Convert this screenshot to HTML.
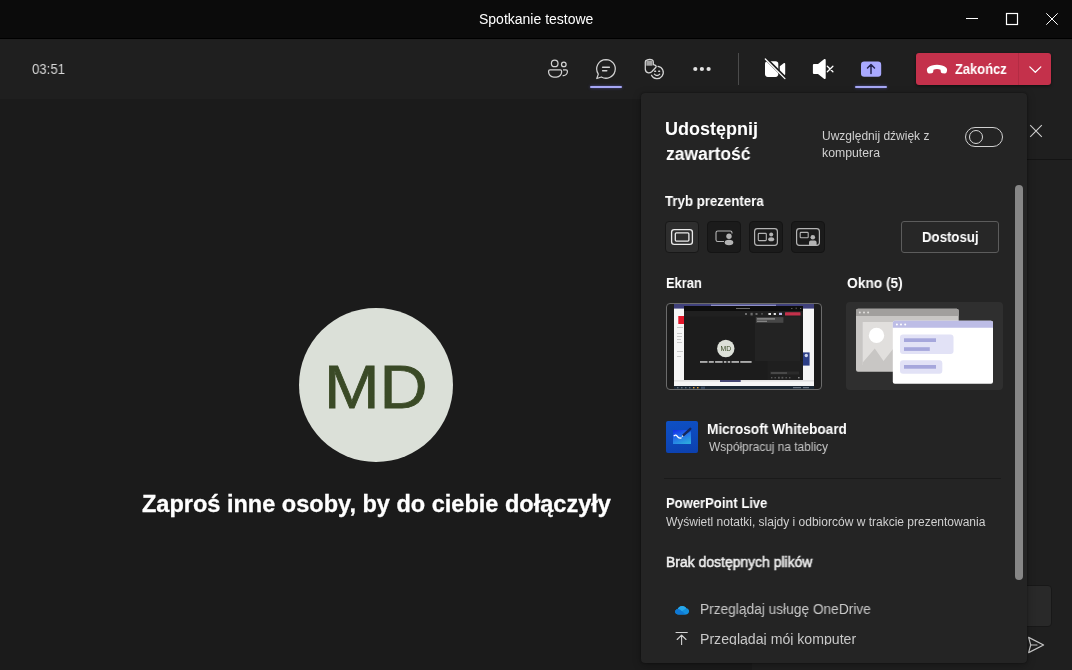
<!DOCTYPE html>
<html lang="pl">
<head>
<meta charset="utf-8">
<title>Spotkanie testowe</title>
<style>
*{box-sizing:border-box;margin:0;padding:0}
html,body{width:1072px;height:670px;overflow:hidden;background:#1b1b1b}
body{font-family:"Liberation Sans",sans-serif;color:#fff;position:relative}
.abs{position:absolute}
.t{position:absolute;white-space:nowrap;line-height:1;transform-origin:0 0;display:block;will-change:transform}
svg{position:absolute;overflow:visible}
#titlebar{position:absolute;left:0;top:0;width:1072px;height:39px;background:#0b0b0b;border-bottom:1px solid #000}
#toolbar{position:absolute;left:0;top:39px;width:1072px;height:60px;background:#1f1f1f}
#stage{position:absolute;left:0;top:99px;width:752px;height:571px;background:#1b1b1b}
#side{position:absolute;left:752px;top:99px;width:320px;height:571px;background:#1f1f1f}
#sidehead{position:absolute;left:0;top:0;width:320px;height:61px;border-bottom:1px solid #141414}
#compose{position:absolute;left:20px;top:486px;width:280px;height:42px;background:#292929;border:1px solid #181818;border-radius:4px}
#avatar{position:absolute;left:299px;top:308px;width:154px;height:154px;border-radius:50%;background:#dbe0d8}
.ul{position:absolute;height:2px;top:86px;width:32px;background:#a6a7f6;border-radius:1px;box-shadow:0 0 3px rgba(120,122,255,.55)}
#endbtn{position:absolute;left:916px;top:53px;width:135px;height:32px;background:#c4314b;border-radius:3px;box-shadow:0 1px 3px rgba(0,0,0,.5)}
#endbtn i{position:absolute;left:102px;top:0;width:1px;height:32px;background:#b32b43}
#panel{position:absolute;left:641px;top:93px;width:386px;height:570px;background:#242424;border-radius:4px;box-shadow:0 2px 8px rgba(0,0,0,.3),0 0 2px rgba(0,0,0,.45)}
#pclip{position:absolute;left:0;top:0;width:386px;height:552px;overflow:hidden}
.pm{position:absolute;top:128px;width:34px;height:32px;border-radius:4px;background:#1b1b1b;border:1px solid #141414}
.pm.sel{background:#2e2e2e;border-color:#181818}
#dost{position:absolute;left:260px;top:128px;width:98px;height:32px;border:1px solid #5c5c5c;border-radius:3px;background:#272727}
#toggle{position:absolute;left:324px;top:34px;width:38px;height:20px;border:1px solid #d0d0d0;border-radius:10px}
#toggle i{position:absolute;left:3px;top:2px;width:14px;height:14px;border:1.5px solid #d8d8d8;border-radius:50%}
#sb{position:absolute;left:374px;top:92px;width:8px;height:395px;border-radius:4px;background:#868686}
#scr svg{will-change:transform}
#scr{position:absolute;left:25px;top:210px;width:156px;height:87px;border:1px solid #6b6b6b;border-radius:4px;background:#1c1c1c;overflow:hidden}
#win{position:absolute;left:205px;top:209px;width:157px;height:88px;border-radius:4px;background:#2f2f2f;overflow:hidden}
#hr{position:absolute;left:23px;top:385px;width:337px;height:1px;background:#1a1a1a}
#wbi{position:absolute;left:25px;top:328px;width:32px;height:32px;border-radius:2px;background:linear-gradient(170deg,#0e50c4 0%,#0d49bb 50%,#0c40ae 100%);overflow:hidden}
</style>
</head>
<body>
<div id="titlebar"></div>
<div id="toolbar"></div>
<div id="stage"></div>
<div id="side"><div id="sidehead"></div><div id="compose"></div></div>
<div id="avatar"></div>

<!-- window controls -->
<svg style="left:960px;top:8px" width="104" height="24" viewBox="960 8 104 24" fill="none" stroke="#fff" stroke-width="1">
 <path d="M966 18.5H978"/>
 <rect x="1006.5" y="13.5" width="11" height="11" stroke-width="1.2"/>
 <path d="M1046.3 13.3L1057.7 24.7M1057.7 13.3L1046.3 24.7"/>
</svg>

<!-- toolbar icons -->
<svg id="tbicons" style="left:540px;top:50px" width="360" height="40" viewBox="540 50 360 40" fill="none">
 <!-- people -->
 <g stroke="#d2d2d2" stroke-width="1.25">
  <circle cx="554.7" cy="63.4" r="3.3"/>
  <circle cx="563.8" cy="64.4" r="2.3"/>
  <path d="M550 69.9h10.2a1.4 1.4 0 0 1 1.4 1.4v0.6a5.1 5.1 0 0 1-5.1 5.1h-2.8a5.1 5.1 0 0 1-5.1-5.1v-0.6a1.4 1.4 0 0 1 1.4-1.4z"/>
  <path d="M563 69.9h3a1.4 1.4 0 0 1 1.4 1.4v0.3a4 4 0 0 1-4 4h-0.8"/>
 </g>
 <!-- chat -->
 <g stroke="#d2d2d2" stroke-width="1.25" stroke-linecap="round" stroke-linejoin="round">
  <path d="M606 59.6a9.3 9.3 0 1 1-4.6 17.4l-4.6 1.5 1.5-4.4A9.3 9.3 0 0 1 606 59.6z"/>
  <path d="M602.6 67.2h6.8M602.6 70.8h4.2" stroke-width="1.4"/>
 </g>
 <!-- hand + emoji -->
 <path d="M646.300 60.600h6.100v5.100h-6.100z" fill="#a4a4a4"/>
 <g stroke="#d6d6d6" stroke-width="1.250" stroke-linejoin="round" stroke-linecap="round">
  <path d="M645.300 69.400V62Q645.300 60.400 646.800 60.100Q648.300 59.300 649.800 59.300Q651.300 59.300 652.500 60.100Q653.300 60.500 653.300 62V64.700Q654.300 64.700 655.400 65.400Q656.800 66.300 655.700 67.500L651.700 71.700Q650.200 73.100 648.400 72.900Q645.500 72.400 645.300 69.400z"/>
  <path d="M658 66.350A6.200 6.200 0 1 1 651.500 75.200"/>
  <path d="M654.400 74.100Q657.050 76.900 659.700 74.100" stroke-width="1.300"/>
  <path d="M654.700 71.300h0.900M658.700 71.300h0.900" stroke-width="1.400"/>
 </g>
 <!-- dots -->
 <g fill="#e2e2e2"><circle cx="695.3" cy="69" r="2.1"/><circle cx="701.9" cy="69" r="2.1"/><circle cx="708.6" cy="69" r="2.1"/></g>
 <!-- divider -->
 <path d="M738.5 53V85" stroke="#4b4b4b" stroke-width="1"/>
 <!-- camera off -->
 <g fill="#fff">
  <rect x="765" y="61.2" width="13.3" height="15.7" rx="2.8"/>
  <path d="M779.8 66.2l4.2-3.1c0.5-0.4 1.2 0 1.2 0.6v10.6c0 0.6-0.7 1-1.2 0.6l-4.2-3.1z"/>
 </g>
 <path d="M765.9 58.6L785.5 78.2" stroke="#1f1f1f" stroke-width="3.2" stroke-linecap="round"/>
 <path d="M765.3 59L784.9 78.6" stroke="#fff" stroke-width="1.3" stroke-linecap="round"/>
 <!-- speaker mute -->
 <path d="M813.9 64h4.1l6-4.8c0.7-0.5 1.7 0 1.7 0.8v18c0 0.9-1 1.3-1.7 0.8l-6-4.8h-4.1a1 1 0 0 1-1-1v-8a1 1 0 0 1 1-1z" fill="#fff"/>
 <path d="M827.3 66.2l5.6 5.6M832.9 66.2l-5.6 5.6" stroke="#fff" stroke-width="1.3" stroke-linecap="round"/>
 <!-- share -->
 <rect x="861" y="61.5" width="20.2" height="15.2" rx="3.2" fill="#a9a9ff"/>
 <path d="M871 73.6V65M867.5 68L871 64.5L874.5 68" stroke="#23234f" stroke-width="1.5" stroke-linecap="round" stroke-linejoin="round"/>
</svg>
<div class="ul" style="left:590px"></div>
<div class="ul" style="left:855px"></div>

<div id="endbtn"><i></i>
 <svg style="left:0;top:0" width="135" height="32" viewBox="916 53 135 32" fill="none">
  <path d="M937 64.7c-3.6 0-6.900 1-9 2.700-1 0.800-1.300 2.100-1 3.300l0.300 1.400c0.200 0.900 1 1.500 1.900 1.400l2.500-0.300c0.800-0.100 1.400-0.700 1.500-1.500l0.300-2c1.100-0.400 2.300-0.600 3.500-0.600s2.400 0.200 3.500 0.600l0.300 2c0.100 0.800 0.700 1.400 1.500 1.500l2.500 0.300c0.900 0.100 1.700-0.500 1.900-1.400l0.300-1.400c0.300-1.200 0-2.500-1-3.300-2.100-1.700-5.400-2.700-9-2.700z" fill="#fff"/>
  <path d="M1029.800 66.900L1035.300 72.200L1040.800 66.900" stroke="#fff" stroke-width="1.3" stroke-linecap="round" stroke-linejoin="round"/>
 </svg>
</div>

<!-- side panel bits -->
<svg style="left:1027px;top:120px" width="45" height="24" viewBox="1027 120 45 24" fill="none" stroke="#cfcfcf" stroke-width="1.1">
 <path d="M1030.200 125.200L1041.800 136.800M1041.800 125.200L1030.200 136.800"/>
</svg>
<svg style="left:1027px;top:635px" width="20" height="20" viewBox="1027 635 20 20" fill="none" stroke="#c8c8c8" stroke-width="1.2" stroke-linejoin="round" stroke-linecap="round">
 <path d="M1028.600 637.400L1043.600 645L1028.600 652.600L1030.700 645z"/><path d="M1030.700 645H1037"/>
</svg>

<div id="panel"><div id="pclip">
 <div id="toggle"><i></i></div>
 <div class="pm sel" style="left:24px"></div>
 <div class="pm" style="left:66px"></div>
 <div class="pm" style="left:108px"></div>
 <div class="pm" style="left:150px"></div>
 <svg style="left:24px;top:128px" width="160" height="32" viewBox="665 221 160 32" fill="none">
  <g stroke="#ececec" stroke-width="1.3"><rect x="671.600" y="229.600" width="20.800" height="14.800" rx="2.600"/><rect x="675.300" y="232.900" width="13.600" height="8.200" rx="1"/></g>
  <g stroke="#b4b4b4" stroke-width="1.1"><path d="M724 241.500h-6.200a1.800 1.800 0 0 1-1.800-1.800v-6.900a1.800 1.800 0 0 1 1.800-1.800h12.400a1.800 1.800 0 0 1 1.800 1.800v0.800"/></g>
  <g fill="#b4b4b4"><circle cx="729" cy="236.200" r="2.700"/><ellipse cx="729" cy="242.500" rx="4.300" ry="2.700"/></g>
  <g stroke="#b4b4b4" stroke-width="1.200"><rect x="754.600" y="228.600" width="22.800" height="16.800" rx="2.800"/><rect x="758.300" y="233.400" width="8" height="7.200" rx="0.800" stroke-width="1.100"/></g>
  <g fill="#b4b4b4"><circle cx="771.200" cy="234.600" r="2"/><ellipse cx="771.200" cy="239.300" rx="3" ry="2"/></g>
  <g stroke="#b4b4b4" stroke-width="1.200"><rect x="796.600" y="228.600" width="22.800" height="16.800" rx="2.800"/><rect x="800.200" y="232.400" width="8" height="5.400" rx="0.800" stroke-width="1.100"/></g>
  <g fill="#b4b4b4"><circle cx="812.800" cy="237.300" r="2.300"/><path d="M809 245v-2.600a1.800 1.800 0 0 1 1.800-1.800h4a1.800 1.800 0 0 1 1.800 1.800v2.600z"/></g>
 </svg>
 <div id="dost"></div>

 <!-- Ekran thumbnail -->
 <div id="scr">
  <svg style="left:-1px;top:-1px" width="156" height="87" viewBox="666 303 156 87">
   <rect x="674" y="303" width="140" height="87" fill="#f6f6f6"/>
   <rect x="674" y="303" width="140" height="5.600" fill="#40417c"/><rect x="711" y="304.700" width="65" height="1.500" fill="#8d8ec6"/>
   <rect x="674" y="386" width="140" height="3" fill="#1b2733"/>
   <rect x="674" y="389" width="140" height="1" fill="#1c1c1c"/>
   <rect x="678.300" y="316" width="6" height="8" fill="#e3162a"/>
   <g fill="#c9c9c9"><rect x="677" y="327" width="6" height="1"/><rect x="677" y="333" width="5" height="1"/><rect x="677" y="336" width="5" height="1"/><rect x="677" y="339" width="4" height="1"/><rect x="677" y="342" width="5" height="1"/><rect x="677" y="351" width="6" height="1"/><rect x="677" y="356" width="4" height="1"/></g>
   <rect x="803" y="352.400" width="6.600" height="13.200" fill="#2c3e86"/><circle cx="806.300" cy="355.500" r="1.700" fill="#cfd6ee"/>
   <rect x="674" y="380.500" width="140" height="0.800" fill="#d0d0d0"/>
   <rect x="684" y="306" width="119" height="74" fill="#1c1c1c"/>
   <rect x="684" y="306" width="119" height="5" fill="#0d0d0d"/>
   <rect x="684" y="311" width="119" height="5.600" fill="#202020"/>
   <rect x="755" y="316.600" width="45" height="44.400" fill="#232323"/>
   <rect x="756" y="317.200" width="27.400" height="5.600" fill="#474747"/>
   <rect x="757" y="318.300" width="18" height="1.200" fill="#9a9a9a"/><rect x="757" y="320.700" width="10" height="1.200" fill="#8a8a8a"/>
   <rect x="767.500" y="361" width="35.500" height="19" fill="#1f1f1f"/>
   <rect x="770" y="371.500" width="29" height="3" fill="#2b2b2b"/><rect x="771" y="372.600" width="16" height="0.800" fill="#777"/><g fill="#5a5a5a"><rect x="771" y="377" width="1.400" height="1.400"/><rect x="774.500" y="377" width="1.400" height="1.400"/><rect x="778" y="376.800" width="1.800" height="1.800"/><rect x="781.500" y="376.800" width="1.800" height="1.800"/><rect x="785.500" y="377" width="1.400" height="1.400"/><rect x="789" y="377" width="1.400" height="1.400"/><rect x="798" y="377" width="1.600" height="1.400" fill="#8a8a8a"/></g>
   <rect x="785" y="312.200" width="15.500" height="3.400" rx="0.600" fill="#c4314b"/>
   <g fill="#6c6c6c"><rect x="745" y="313" width="2" height="2"/><rect x="750.500" y="312.800" width="2.200" height="2.600"/><rect x="755.500" y="313" width="2" height="2"/><rect x="761" y="313.400" width="2" height="1"/></g><g fill="#e6e6e6"><rect x="768.400" y="313" width="2.600" height="2"/><rect x="773.700" y="313" width="2.200" height="2"/></g>
   <rect x="779" y="312.800" width="3" height="2.200" fill="#b9b9e8"/>
   <rect x="736" y="308" width="14" height="1" fill="#6a6a6a"/><rect x="791" y="308" width="1.500" height="1" fill="#555"/><rect x="795.500" y="307.600" width="1.500" height="1.500" fill="#444"/><rect x="800" y="308" width="1.200" height="1" fill="#666"/>
   <circle cx="725.800" cy="348.500" r="8.700" fill="#dce0d8"/>
   <text x="725.800" y="351" font-family="Liberation Sans, sans-serif" font-size="6.800" fill="#3a4a26" text-anchor="middle">MD</text>
   <g fill="#cfcfcf"><rect x="700.0" y="361.200" width="7.5" height="1.500"/><rect x="708.8" y="361.200" width="5.0" height="1.500"/><rect x="715.1" y="361.200" width="7.5" height="1.500"/><rect x="723.9" y="361.200" width="2.5" height="1.500"/><rect x="727.7" y="361.200" width="2.5" height="1.500"/><rect x="731.5" y="361.200" width="7.5" height="1.500"/><rect x="740.3" y="361.200" width="11.3" height="1.500"/></g>
   <rect x="720" y="380" width="20.700" height="2" fill="#464775"/>
   <g fill="#5e6b78"><rect x="677" y="387" width="1.500" height="1.400"/><rect x="681" y="387" width="1.500" height="1.400"/><rect x="685" y="387" width="1.500" height="1.400"/><rect x="689" y="387" width="1.500" height="1.400"/></g>
   <g fill="#e6a23c"><rect x="693" y="387" width="1.500" height="1.400"/><rect x="697" y="387" width="1.500" height="1.400"/></g>
   <rect x="701" y="386.600" width="4" height="2.200" fill="#3d4f63"/>
   <g fill="#7d8893"><rect x="793" y="387.200" width="8" height="1"/><rect x="803" y="387.200" width="6" height="1"/></g>
  </svg>
 </div>

 <!-- Okno thumbnail -->
 <div id="win">
  <svg style="left:0;top:0" width="157" height="88" viewBox="846 302 157 88">
   <rect x="856" y="308.800" width="102.700" height="63" rx="2" fill="#c8c6c4"/>
   <path d="M856 316v-5.200a2 2 0 0 1 2-2h98.700a2 2 0 0 1 2 2v5.200z" fill="#a19f9d"/>
   <g fill="#e1dfdd"><circle cx="859.800" cy="312.600" r="1"/><circle cx="864" cy="312.600" r="1"/><circle cx="868.100" cy="312.600" r="1"/></g>
   <rect x="862.700" y="322" width="40" height="43" fill="#e1dfdd"/>
   <path d="M862.700 365V362.500L874.800 348.500L883.500 361L893 349V365z" fill="#c8c6c4"/>
   <circle cx="876.500" cy="335.400" r="7.700" fill="#fff"/>
   <rect x="892.800" y="320.800" width="100.200" height="63" rx="2" fill="#fff"/>
   <path d="M892.800 327.800v-5a2 2 0 0 1 2-2h96.200a2 2 0 0 1 2 2v5z" fill="#bdbde6"/>
   <g fill="#fff"><circle cx="896.900" cy="324.400" r="1"/><circle cx="901" cy="324.400" r="1"/><circle cx="905.200" cy="324.400" r="1"/></g>
   <rect x="900" y="334.400" width="53.500" height="19.600" rx="3" fill="#e2e2f6"/>
   <rect x="904" y="338.300" width="32" height="3.700" fill="#a6a7dc"/>
   <rect x="904" y="347.200" width="25.800" height="3.700" fill="#a6a7dc"/>
   <rect x="900" y="360.200" width="42.300" height="13.600" rx="3" fill="#e2e2f6"/>
   <rect x="904" y="365" width="32" height="3.700" fill="#a6a7dc"/>
  </svg>
 </div>

 <!-- whiteboard icon -->
 <div id="wbi">
  <svg style="left:0;top:0" width="32" height="32" viewBox="666 421 32 32" fill="none">
   <defs><linearGradient id="wbg" x1="0.200" y1="0" x2="0.700" y2="1"><stop offset="0" stop-color="#1234ea"/><stop offset="0.450" stop-color="#2470e8"/><stop offset="1" stop-color="#2ba8de"/></linearGradient></defs>
   <path d="M673 429.900H687.400L691 430.800V444H673z" fill="url(#wbg)"/>
   <path d="M682 436.600L689.300 428.700L691.200 428.300V431z" fill="#0d49bd"/>
   <path d="M674.100 435.700c1.300-1 2.300-0.700 3.200 0.700s1.700 2.300 3.800 1.500" stroke="#fff" stroke-width="1.300" stroke-linecap="round"/>
   <path d="M683.200 435.400L690.300 428.800" stroke="#16265a" stroke-width="2.300" stroke-linecap="round"/>
   <path d="M681.700 436.900l1.900-0.500-1.300-1.400z" fill="#e8f2fc"/>
  </svg>
 </div>
 <div id="hr"></div>

 <!-- onedrive + upload icons -->
 <svg style="left:30px;top:508px" width="24" height="48" viewBox="671 601 24 48" fill="none">
  <g transform="translate(0 61.600) scale(1 0.899)">
  <path d="M678.400 615c-1.800 0-3.300-1.300-3.300-3 0-1.500 1.100-2.700 2.600-3 0.500-2 2.300-3.500 4.500-3.500 1.900 0 3.500 1.100 4.200 2.700 1.500 0.100 2.700 1.500 2.700 3.300 0 2-1.500 3.500-3.300 3.500z" fill="#1490df"/>
  <path d="M677.700 609c0.500-2 2.300-3.500 4.500-3.500 1.900 0 3.500 1.100 4.200 2.700l-4.700 3.200z" fill="#28a8ea"/>
  <path d="M678.400 615c-1.800 0-3.300-1.300-3.300-3 0-1.500 1.100-2.700 2.600-3 1 0 1.800 0.300 2.500 0.800l5.600 5.200z" fill="#0f78d4"/>
  </g>
  <path d="M676 632.500H687.300M681.600 645.500V635.200M677.200 639.500L681.600 635.100L686 639.500" stroke="#d2d2d2" stroke-width="1.100" stroke-linecap="round" stroke-linejoin="round"/>
 </svg>
 <div id="sb"></div>
 <span class="t" style="left:23.90px;top:27.00px;font-size:18px;font-weight:700;color:#ffffff;transform:scaleX(0.9996);">Udostępnij</span>
 <span class="t" style="left:24.75px;top:52.00px;font-size:18px;font-weight:700;color:#ffffff;transform:scaleX(0.9705);">zawartość</span>
 <span class="t" style="left:181.07px;top:37.00px;font-size:12px;font-weight:400;color:#d0d0d0;transform:scaleX(1.0009);">Uwzględnij dźwięk z</span>
 <span class="t" style="left:181.05px;top:54.00px;font-size:12px;font-weight:400;color:#d0d0d0;transform:scaleX(1.0227);">komputera</span>
 <span class="t" style="left:23.64px;top:101.00px;font-size:14px;font-weight:700;color:#ffffff;transform:scaleX(0.9466);">Tryb prezentera</span>
 <span class="t" style="left:281.11px;top:137.00px;font-size:14px;font-weight:700;color:#ffffff;transform:scaleX(0.9438);">Dostosuj</span>
 <span class="t" style="left:24.73px;top:183.00px;font-size:14px;font-weight:700;color:#ffffff;transform:scaleX(0.9241);">Ekran</span>
 <span class="t" style="left:205.51px;top:183.00px;font-size:14px;font-weight:700;color:#ffffff;transform:scaleX(0.9826);">Okno (5)</span>
 <span class="t" style="left:66.49px;top:329.00px;font-size:14px;font-weight:700;color:#ffffff;transform:scaleX(0.9721);">Microsoft Whiteboard</span>
 <span class="t" style="left:67.50px;top:348.00px;font-size:12px;font-weight:400;color:#c8c8c8;transform:scaleX(0.9917);">Współpracuj na tablicy</span>
 <span class="t" style="left:24.72px;top:403.00px;font-size:14px;font-weight:700;color:#ffffff;transform:scaleX(0.9307);">PowerPoint Live</span>
 <span class="t" style="left:25.40px;top:423.00px;font-size:12px;font-weight:400;color:#d0d0d0;transform:scaleX(0.9999);">Wyświetl notatki, slajdy i odbiorców w trakcie prezentowania</span>
 <span class="t" style="left:24.97px;top:462.00px;font-size:14px;font-weight:400;color:#f0f0f0;transform:scaleX(0.9948);-webkit-text-stroke:0.5px #f0f0f0">Brak dostępnych plików</span>
 <span class="t" style="left:58.66px;top:509.00px;font-size:14px;font-weight:400;color:#c8c8c8;transform:scaleX(0.9797);">Przeglądaj usługę OneDrive</span>
 <span class="t" style="left:58.62px;top:539.00px;font-size:14px;font-weight:400;color:#c8c8c8;transform:scaleX(1.0085);">Przeglądaj mój komputer</span>
</div></div>
<span class="t" style="left:478.73px;top:12.00px;font-size:14px;font-weight:400;color:#ffffff;transform:scaleX(0.9994);">Spotkanie testowe</span>
<span class="t" style="left:31.93px;top:62.00px;font-size:14px;font-weight:400;color:#d6d6d6;transform:scaleX(0.9429);">03:51</span>
<span class="t" style="left:954.69px;top:62.00px;font-size:14px;font-weight:700;color:#ffffff;transform:scaleX(0.9227);">Zakończ</span>
<span class="t" style="left:142.40px;top:493.00px;font-size:23.5px;font-weight:700;color:#ffffff;transform:scaleX(1.0010);-webkit-text-stroke:0.3px #fff">Zaproś inne osoby, by do ciebie dołączyły</span>
<span class="t" style="left:323.98px;top:356.00px;font-size:62px;font-weight:400;color:#3a4a26;transform:scaleX(1.0766);-webkit-text-stroke:0.8px #3a4a26">MD</span>
</body>
</html>
